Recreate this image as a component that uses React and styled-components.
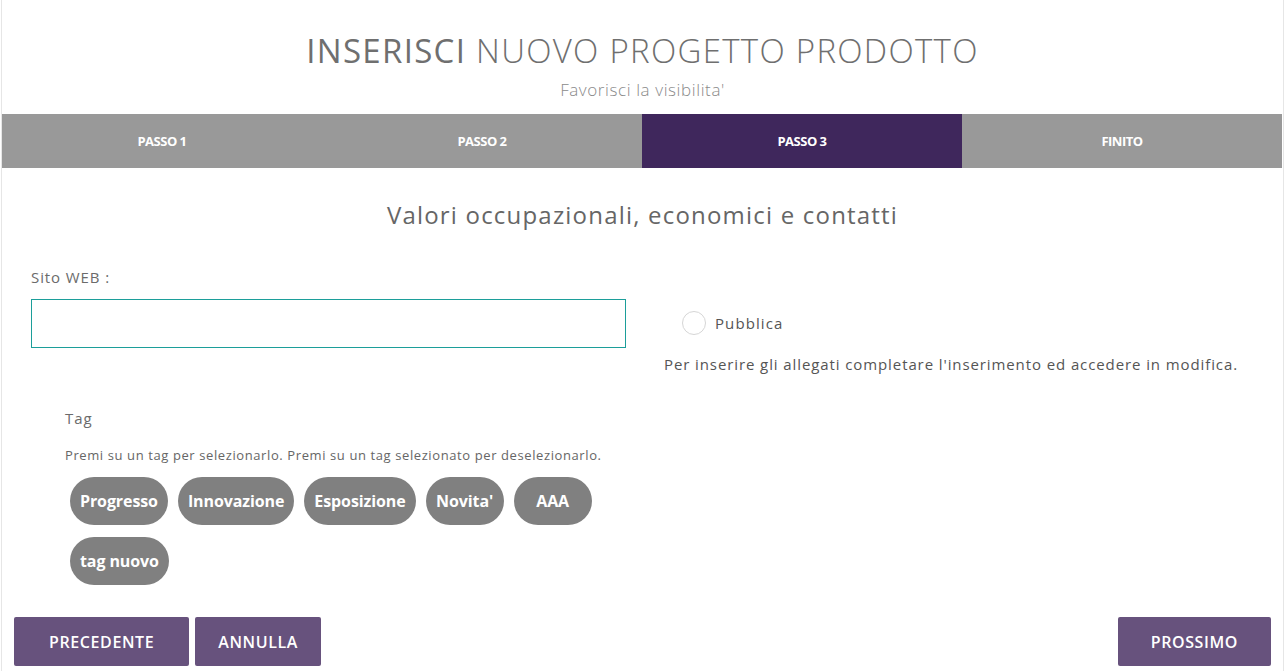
import React from 'react';
import styled, { createGlobalStyle } from 'styled-components';

const GlobalStyle = createGlobalStyle`
  body {
    margin: 0;
    background: #fff;
    font-family: "Open Sans", "Liberation Sans", sans-serif;
  }
`;

const Page = styled.div`
  width: 1281px;
  min-height: 671px;
  margin-left: 1px;
  border-left: 1px solid #e6e6e6;
  border-right: 1px solid #e6e6e6;
  box-sizing: content-box;
`;

const Header = styled.header`
  text-align: center;
  padding-top: 31px;
  height: 114px;
  box-sizing: border-box;
`;

const Title = styled.h1`
  margin: 0;
  font-size: 33px;
  line-height: 40px;
  font-weight: 300;
  color: #6f6f6f;
  letter-spacing: 1.3px;
  b {
    font-weight: 500;
  }
`;

const Subtitle = styled.p`
  margin: 7px 0 0;
  font-size: 17px;
  line-height: 24px;
  font-weight: 300;
  color: #8a8a8a;
  letter-spacing: 0.6px;
`;

const Steps = styled.nav`
  display: grid;
  grid-template-columns: repeat(4, 1fr);
  height: 54px;
  width: 1280px;
`;

const Step = styled.div`
  display: flex;
  align-items: center;
  justify-content: center;
  background: ${p => (p.$active ? '#3f275c' : '#999999')};
  color: #fff;
  font-size: 13px;
  font-weight: 700;
  letter-spacing: -0.5px;
`;

const SectionTitle = styled.h2`
  margin: 31px 0 0;
  text-align: center;
  font-size: 24px;
  line-height: 32px;
  font-weight: 400;
  color: #666;
  letter-spacing: 1.2px;
`;

const FormRow = styled.div`
  display: grid;
  grid-template-columns: 640px 1fr;
  margin-top: 36px;
`;

const LeftCol = styled.div`
  padding-left: 29px;
`;

const RightCol = styled.div`
  padding-top: 44px;
  padding-left: 22px;
`;

const Label = styled.label`
  display: block;
  font-size: 15px;
  line-height: 20px;
  color: #6b6b6b;
  letter-spacing: 0.9px;
`;

const TextInput = styled.input`
  display: block;
  margin-top: 12px;
  width: 595px;
  height: 49px;
  box-sizing: border-box;
  border: 1px solid #1c9e9a;
  outline: none;
`;

const RadioRow = styled.label`
  display: flex;
  align-items: center;
  gap: 9px;
  margin-left: 18px;
  font-size: 15px;
  line-height: 24px;
  color: #555;
  letter-spacing: 1.1px;
`;

const RadioCircle = styled.span`
  width: 22px;
  height: 22px;
  border-radius: 50%;
  border: 1px solid #d6d6d6;
  background: #fff;
`;

const Note = styled.p`
  margin: 19px 0 0;
  font-size: 15px;
  color: #555;
  letter-spacing: 0.9px;
`;

const TagSection = styled.section`
  padding-left: 63px;
  margin-top: 34px;
  width: 600px;
`;

const SmallText = styled.p`
  margin: 18px 0 0;
  font-size: 13px;
  color: #666;
  letter-spacing: 0.6px;
`;

const TagList = styled.div`
  display: flex;
  flex-wrap: wrap;
  gap: 12px 10px;
  margin-top: 13px;
  padding-left: 5px;
  width: 540px;
`;

const TagPill = styled.button`
  height: 48px;
  padding: 0 10px;
  border: none;
  border-radius: 24px;
  background: #808080;
  color: #fff;
  font-family: "Open Sans", "Liberation Sans", sans-serif;
  font-size: 16px;
  font-weight: 700;
  letter-spacing: -0.1px;
  min-width: ${p => (p.$wide ? '78px' : 'auto')};
`;

const Footer = styled.div`
  display: flex;
  justify-content: space-between;
  padding: 32px 12px 0 12px;
`;

const ButtonGroup = styled.div`
  display: flex;
  gap: 6px;
`;

const ActionButton = styled.button`
  height: 49px;
  padding: 0 ${p => p.$pad || 32}px;
  border: none;
  border-radius: 2px;
  background: #67527d;
  color: #fff;
  font-family: "Open Sans", "Liberation Sans", sans-serif;
  font-size: 16px;
  font-weight: 600;
  letter-spacing: 0.6px;
  text-transform: uppercase;
`;

const tags = ['Progresso', 'Innovazione', 'Esposizione', "Novita'", 'AAA', 'tag nuovo'];

export default function App() {
  return (
    <>
      <GlobalStyle />
      <Page>
        <Header>
          <Title>
            <b>INSERISCI</b> NUOVO PROGETTO PRODOTTO
          </Title>
          <Subtitle>Favorisci la visibilita'</Subtitle>
        </Header>
        <Steps>
          <Step>PASSO 1</Step>
          <Step>PASSO 2</Step>
          <Step $active>PASSO 3</Step>
          <Step>FINITO</Step>
        </Steps>
        <SectionTitle>Valori occupazionali, economici e contatti</SectionTitle>
        <FormRow>
          <LeftCol>
            <Label>Sito WEB :</Label>
            <TextInput type="text" />
          </LeftCol>
          <RightCol>
            <RadioRow>
              <RadioCircle />
              Pubblica
            </RadioRow>
            <Note>Per inserire gli allegati completare l'inserimento ed accedere in modifica.</Note>
          </RightCol>
        </FormRow>
        <TagSection>
          <Label>Tag</Label>
          <SmallText>Premi su un tag per selezionarlo. Premi su un tag selezionato per deselezionarlo.</SmallText>
          <TagList>
            {tags.map(t => (
              <TagPill key={t} $wide={t === 'AAA' || t === "Novita'"}>{t}</TagPill>
            ))}
          </TagList>
        </TagSection>
        <Footer>
          <ButtonGroup>
            <ActionButton $pad={35}>Precedente</ActionButton>
            <ActionButton $pad={23}>Annulla</ActionButton>
          </ButtonGroup>
          <ActionButton $pad={33}>Prossimo</ActionButton>
        </Footer>
      </Page>
    </>
  );
}
